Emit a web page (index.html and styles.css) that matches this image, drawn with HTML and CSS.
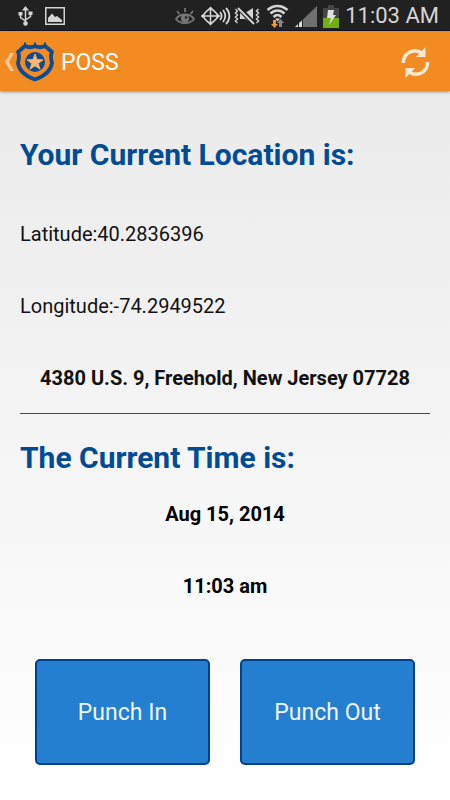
FILE: index.html
```html
<!DOCTYPE html>
<html lang="en">
<head>
    <meta charset="UTF-8">
    <meta name="viewport" content="width=device-width, initial-scale=1.0">
    <title>POSS</title>
    <link rel="stylesheet" href="styles.css">
</head>
<body>
    <div class="status-bar">
        <div class="status-group notifications">
            <svg width="15" height="20" viewBox="0 0 15 20" fill="none" stroke="#d4d4d4" stroke-width="1.5">
                <path d="M7.5 3v14M2.5 8v3.5l5 3.500M12.500 7v3.500l-5 3.500"/>
                <path d="M7.500 0l3.500 4.500h-7zM.5 6h4v3.500h-4zM10.500 5.500h4v3.500h-4z" fill="#d4d4d4" stroke="none"/>
                <circle cx="7.500" cy="17.500" r="2.300" fill="#d4d4d4" stroke="none"/>
            </svg>
            <svg width="20" height="18" viewBox="0 0 20 18">
                <path d="M.75.75h18.500v16.500H.75z" fill="none" stroke="#d4d4d4" stroke-width="1.500"/>
                <path d="M3 15v-4l4-4.500 3 3.500 2-1 5 4v2z" fill="#d4d4d4"/>
            </svg>
        </div>
        <div class="status-group">
            <svg width="20" height="20" viewBox="0 0 20 20" fill="none" stroke="#777" stroke-width="1.800">
                <path d="M1 13c4-6 14-6 18 0-4 5.500-14 5.500-18 0zM10 6V2M4.500 8L2 5M15.500 8L18 5"/>
                <circle cx="10" cy="12.500" r="4" fill="#777" stroke="none"/>
                <circle cx="11" cy="11.500" r="1.200" fill="#222" stroke="none"/>
            </svg>
            <svg class="motion" width="30" height="20" viewBox="0 0 30 20" fill="none" stroke="#d4d4d4" stroke-width="1.500">
                <path d="M9.500 1.500L18 10l-8.500 8.500L1 10zM9.500 1v18M0 10h19"/>
                <circle cx="9.500" cy="10" r="6.500" stroke-width="1"/>
                <path d="M19 6c2 2.500 2 5.500 0 8M22 4c3 3.500 3 8.500 0 12M25 2c4.500 4.500 4.500 11.500 0 16" stroke-width="1.800"/>
            </svg>
            <svg width="26" height="20" viewBox="0 0 26 20" fill="none" stroke="#d4d4d4" stroke-width="1.500">
                <path d="M1.500 3l2 2-2 2 2 2-2 2 2 2-2 2 2 2M24.500 3l-2 2 2 2-2 2 2 2-2 2 2 2-2 2"/>
                <path d="M6 7h5l8-5v16l-8-5H6z" fill="#d4d4d4" stroke="none"/>
                <path d="M4 1l16 17" stroke="#222" stroke-width="5"/>
                <path d="M4 2l16 16" stroke-width="2"/>
            </svg>
            <svg width="23" height="24" viewBox="0 0 23 24" fill="none" stroke="#d4d4d4" stroke-width="2.500">
                <path d="M1.500 6c6-5.500 14-5.500 20 0M4.500 9.500c4-4 10-4 14 0M7.500 13c2.500-2.500 5.500-2.500 8 0"/>
                <path d="M9 14.500h5l-2.500 3z" fill="#d4d4d4" stroke="none"/>
                <path d="M7 16h3v4h2l-3.500 4L5 20h2z" fill="#f19a2b" stroke="none"/>
                <path d="M13 23v-4h-2l3.500-4 3.500 4h-2v4z" fill="#888" stroke="none"/>
            </svg>
            <svg class="signal" width="22" height="21" viewBox="0 0 22 21">
                <path d="M0 21L22 0v21z" fill="#707070"/>
                <path d="M0 21l8-7.600V21z" fill="#e0e0e0"/>
                <path d="M3.500 16v5M7.500 12v9" stroke="#222"/>
            </svg>
            <svg class="battery" width="16" height="23" viewBox="0 0 16 23">
                <path d="M5 0h6v3h5v20H0V3h5z" fill="#454545"/>
                <path d="M0 13h16v10H0z" fill="#73ad13"/>
                <path d="M5 5h6l-1 5h3L6 20l2-7H4z" fill="#e0e0e0"/>
            </svg>
            <span class="clock">11:03 AM</span>
        </div>
    </div>

    <header class="action-bar">
        <a href="#" class="home">
            <svg width="9" height="18" viewBox="0 0 9 18">
                <path d="M5.500 0H9L4 9l5 9H5.500L0 9z" fill="#f9c996"/>
            </svg>
            <svg width="41" height="40" viewBox="0 0 41 40">
                <path d="M11 4q5 2.500 10 0q5 2.500 10 0l7 6c-2 4-1 7 0 11c-1 7-7 13-17 16.500c-10-3.500-16-9.500-17-16.500c1-4 2-7 0-11z" fill="none" stroke="#0c4b96" stroke-width="3.800" stroke-linejoin="round"/>
                <path d="M11 .5v4M21 .5v4M31 .5v4" stroke="#0c4b96" stroke-width="2"/>
                <circle cx="21" cy="20" r="10" fill="#0c4b96"/>
                <path d="M21 12l2 5.600 6 .2-4.700 3.700 1.700 5.700-5-3.400-5 3.400 1.700-5.700-4.700-3.700 6-.2z" fill="#f9b871" stroke="#f9a95a" stroke-width="1"/>
            </svg>
            <span class="title">POSS</span>
        </a>
        <button type="button" class="refresh" aria-label="Refresh">
            <svg width="29" height="31" viewBox="0 0 29 31">
                <path d="M2.500 16A11.500 11.500 0 0 1 20 5.500M26.500 15A11.500 11.500 0 0 1 9 25.500" fill="none" stroke="#fde8d2" stroke-width="3.500"/>
                <path d="M24.500 0v10H15zM4.500 31V21H14z" fill="#fde8d2"/>
            </svg>
        </button>
    </header>

    <main class="content">
        <section class="location">
            <h2>Your Current Location is:</h2>
            <p>Latitude:40.2836396</p>
            <p>Longitude:-74.2949522</p>
            <p class="value">4380 U.S. 9, Freehold, New Jersey 07728</p>
        </section>
        <section class="time">
            <h2>The Current Time is:</h2>
            <p class="value">Aug 15, 2014</p>
            <p class="value">11:03 am</p>
        </section>
        <div class="actions">
            <button type="button" class="btn">Punch In</button>
            <button type="button" class="btn">Punch Out</button>
        </div>
    </main>
</body>
</html>
```
FILE: styles.css
```css
* {
    box-sizing: border-box;
}

body {
    margin: 0;
    min-height: 100vh;
    font-family: Roboto, "Liberation Sans", sans-serif;
    color: #111;
    background: linear-gradient(#e8e8e8, #fff);
}

svg {
    display: block;
    flex: none;
}

.status-bar {
    display: flex;
    justify-content: space-between;
    height: 31px;
    padding: 2px 11px 0 18px;
    background: #212121;
    border-bottom: 1px solid #10102a;
}

.status-group {
    display: flex;
    align-items: center;
    gap: 6px;
}

.notifications {
    gap: 12px;
}

.status-group .motion {
    margin-right: -3px;
}

.clock {
    font-size: 22px;
    line-height: 28px;
    color: #d6d6d6;
    white-space: nowrap;
}

.action-bar {
    display: flex;
    align-items: center;
    justify-content: space-between;
    height: 60px;
    padding: 2px 20px 0 5px;
    background: #f28c22;
    box-shadow: 0 1px 3px rgba(0, 0, 0, 0.4);
}

.home {
    display: flex;
    align-items: center;
    color: white;
    text-decoration: none;
}

.title {
    margin-left: 6px;
    font-size: 23px;
}

.refresh {
    padding: 0;
    background: none;
    border: none;
    cursor: pointer;
}

.content {
    padding: 44px 20px 35px;
}

h2 {
    margin: 0;
    font-size: 30px;
    line-height: 40px;
    font-weight: bold;
    color: #004b93;
}

p {
    margin: 48px 0 0;
    font-size: 20px;
    line-height: 24px;
}

.value {
    font-weight: bold;
    text-align: center;
}

.location {
    padding-bottom: 23px;
    border-bottom: 1px solid #0b4fc4;
}

.location h2 + p {
    margin-top: 47px;
}

.time {
    padding-top: 24px;
    color: black;
}

.time h2 + p {
    margin-top: 24px;
}

.actions {
    display: flex;
    gap: 30px;
    margin-top: 61px;
    padding: 0 15px;
}

.btn {
    flex: 1;
    height: 106px;
    padding: 0;
    font-family: inherit;
    font-size: 23px;
    color: #eef5fc;
    background: #247fd0;
    border: 2px solid #00408c;
    border-radius: 5px;
    cursor: pointer;
}

.btn:active {
    background: #1c6bb3;
}
```
